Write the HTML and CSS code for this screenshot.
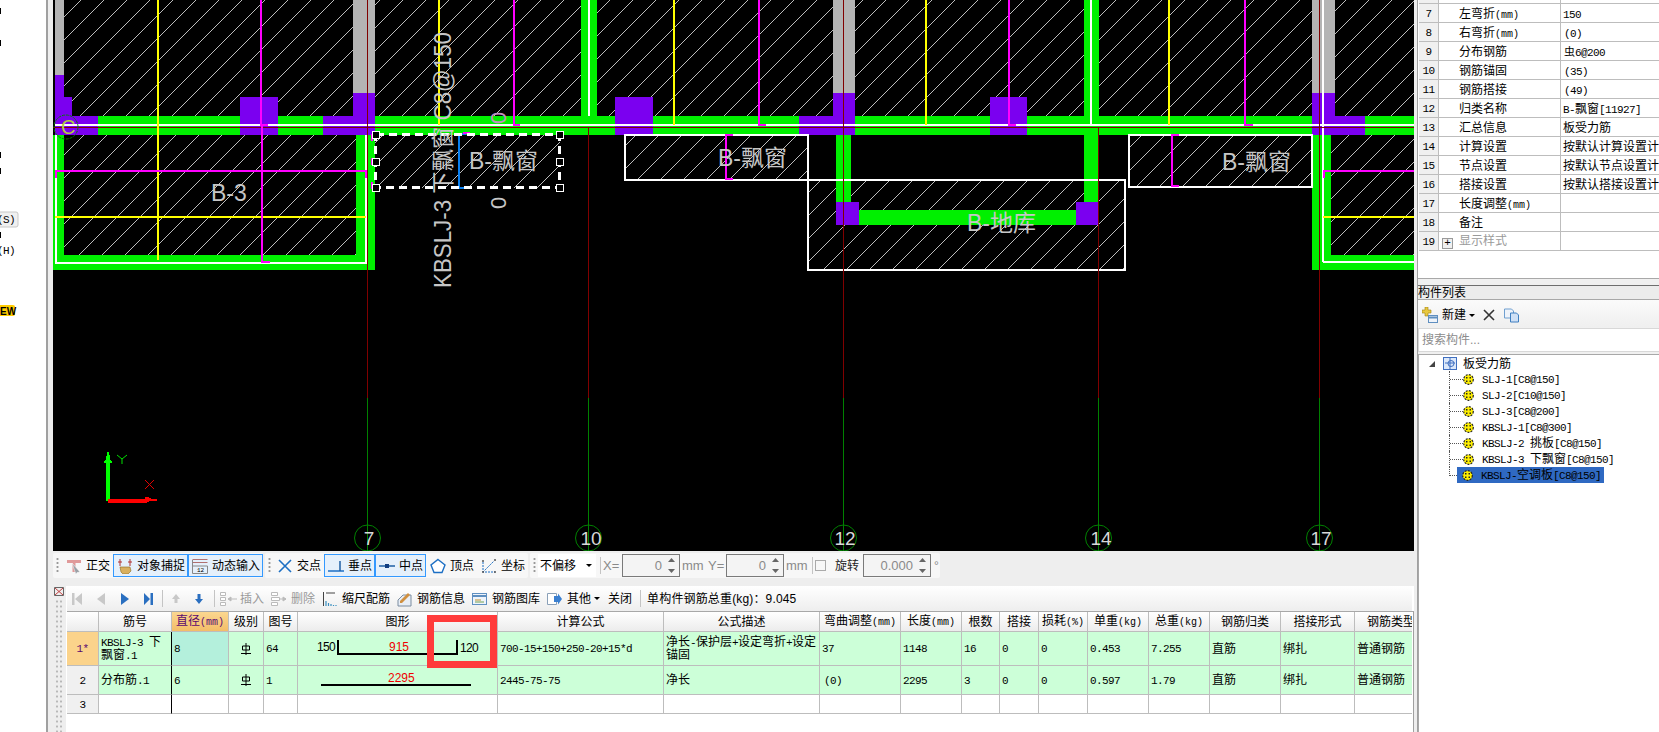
FILE: index.html
```html
<!DOCTYPE html>
<html lang="zh-CN">
<head>
<meta charset="utf-8">
<title>钢筋编辑</title>
<link rel="stylesheet" href="styles.css">
</head>
<body>
<svg width="0" height="0" class="defs">
  <defs>
    <symbol id="gear" viewBox="0 0 11 11">
      <circle cx="5.500" cy="5.500" r="4.800" fill="#fff000" stroke="#222" stroke-width="1.200" stroke-dasharray="2 1.200"/>
      <path d="M3 3h1.500v1.500H3zM6.500 3H8v1.500H6.500zM3 6.500h1.500V8H3zM6.500 6.500H8V8H6.500z" fill="#222"/>
    </symbol>
    <symbol id="dia" viewBox="0 0 10 12">
      <path d="M5 0v12M1.500 3h7v4h-7zM0 10.500h10" fill="none" stroke="#000" stroke-width="1"/>
    </symbol>
    <symbol id="spinner" viewBox="0 0 7 21">
      <path d="M3.500 3 7 7H0zM0 14h7l-3.500 4z" fill="#666"/>
    </symbol>
  </defs>
</svg>
<div class="app">
  <svg class="side" width="46" height="732" viewBox="0 0 46 732">
    <path class="tick" d="M0 8h1v6H0zM0 40h1v6H0zM0 152h1v6H0zM0 168h1v6H0zM0 232h1v6H0z"/>
    <rect class="keybtn" x="-8" y="212" width="26" height="15" rx="2"/>
    <text class="sidetxt" x="-3" y="223">(S)</text>
    <text class="sidetxt" x="-3" y="254">(H)</text>
    <rect class="ewbg" x="-2" y="305" width="17" height="11" rx="2"/>
    <text class="ewtxt" x="0" y="315">EW</text>
  </svg>

  <main class="main">
    <svg class="canvas" width="1361" height="551" viewBox="53 0 1361 551">
      <defs>
        <pattern id="h" width="23" height="23" patternUnits="userSpaceOnUse" x="6" y="6">
          <path d="M-1 24 24 -1" stroke="#bcbcbc" stroke-width="1" fill="none" shape-rendering="crispEdges"/>
        </pattern>
      </defs>
      <rect class="bg" x="53" y="0" width="1361" height="551"/>
      <g fill="url(#h)">
        <rect x="55" y="0" width="1359" height="116"/>
        <rect x="64" y="135" width="292" height="120"/>
        <rect x="375" y="134" width="185" height="54"/>
        <rect x="625" y="134" width="183" height="46"/>
        <rect x="808" y="180" width="317" height="90"/>
        <rect x="1129" y="134" width="183" height="53"/>
        <rect x="1331" y="135" width="83" height="120"/>
      </g>
      <path class="gy" d="M55 0h9v75h-9zM353 0h22v93h-22zM833 0h22v93h-22zM1312 0h23v93h-23z"/>
      <path class="gr" d="M55 116H1414V135H55zM581 0h16v116h-16zM1084 0h15v116h-15zM53 135h11v120h-11zM53 255H375v15H53zM356 135h19v120h-19zM836 135h15v67h-15zM1084 135h15v67h-15zM859 210h217v15H859zM1312 135h19v120h-19zM1312 255h102v15h-102z"/>
      <path class="pu" d="M55 75h9v22h8v19h26v19H55zM240 97h38v38h-38zM323 116h30V93h22v42h-52zM615 97h38v38h-38zM799 116h34V93h22v42h-56zM990 97h37v38h-37zM1312 93h23v23h30v19h-53zM836 202h23v23h-23zM1076 202h23v23h-23z"/>

      <path class="ln wh" d="M55 125H1414M589 0V116M1091 0V125M1323 0V262M1323 262H1414M56 135V262.500H366V135"/>
      <path class="ln wh" d="M625 135H808V180H625zM808 180H1125V270H808zM1129 135H1312V187H1129z"/>
      <path class="thin rd" d="M53 127.500H1414M367.500 0V398M588.500 127V398M843.500 0V398M1098.500 127V398M1319.500 0V398"/>
      <path class="thin dg" d="M367.500 398V551M588.500 398V551M843.500 398V551M1098.500 398V551M1319.500 398V551"/>
      <path class="ln ye" d="M158 0V260M55 217H366M439 0V125M674 0V125M926 0V125M1169 0V125M1323 217H1414"/>
      <path class="ln ma" d="M261 0V125H268M262 125V262H270M56 178V171H366V178M514 0V125H520M759 0V125H766M1009 0V125H1016M1245 0V125H1253M726 134V180M726 135H733M726 179H733M1172 134V187M1172 135H1179M1172 186H1179M1324 178V171H1414"/>

      <path class="ln bl" d="M466 134H459V188H466"/>
      <path class="ln ma" d="M463 133H470M372 134V141M372 158V165M372 182V189M558 134H562"/>
      <rect class="dash" x="375.500" y="134.500" width="184" height="53"/>
      <path class="hd" d="M372 131h7v7h-7zM372 158h7v7h-7zM372 184h7v7h-7zM556 131h7v7h-7zM556 158h7v7h-7zM556 184h7v7h-7z"/>

      <text class="vert" x="451" y="288" textLength="256" lengthAdjust="spacingAndGlyphs" transform="rotate(-90 451 288)">KBSLJ-3 下飘窗 C8@150</text>
      <text class="cad" x="211" y="201">B-3</text>
      <text class="cad" x="469" y="169">B-飘窗</text>
      <text class="cad" x="718" y="166">B-飘窗</text>
      <text class="cad" x="967" y="231">B-地库</text>
      <text class="cad" x="1222" y="170">B-飘窗</text>
      <text class="zero zm" x="506" y="124" transform="rotate(-90 506 124)">0</text>
      <text class="zero" x="506" y="209" transform="rotate(-90 506 209)">0</text>

      <circle class="ax dashc" cx="66" cy="127" r="12"/>
      <text class="axc" x="61" y="134">C</text>
      <g>
        <circle class="ax" cx="367.500" cy="538" r="13"/>
        <circle class="ax" cx="588.500" cy="538" r="13"/>
        <circle class="ax" cx="843.500" cy="538" r="13"/>
        <circle class="ax" cx="1098.500" cy="538" r="13"/>
        <circle class="ax" cx="1319.500" cy="538" r="13"/>
        <text class="axn" x="369" y="545">7</text>
        <text class="axn" x="591" y="545">10</text>
        <text class="axn" x="845" y="545">12</text>
        <text class="axn" x="1101" y="545">14</text>
        <text class="axn" x="1321" y="545">17</text>
      </g>
      <path class="uy" d="M106 501V463h-2v-2l2-1v-4l1-1v-3h2v3l1 1v4l2 1v2h-2v38z"/>
      <path class="ux" d="M108 499h37v-2.500h2l4 2h6v2h-6l-4 2h-2V503h-37z"/>
      <path class="ym" d="M117 455l5 4 5-4M122 459v5"/>
      <path class="xm" d="M145 480l9 9M154 480l-9 9"/>
    </svg>

    <div class="tools">
      <div class="group g1">
        <span class="grip"></span>
        <span class="tool m2">
          <svg class="ic" viewBox="0 0 16 16"><path d="M1 2h14v3H9.500v9h-3V5H1z" fill="#e09a9a"/><path d="M6 5l8 9-3 .5-1 2z" fill="#9aa0a6" stroke="#fff" stroke-width=".5"/></svg>
          <span>正交</span>
        </span>
        <span class="tool on w75">
          <svg class="ic" viewBox="0 0 16 16"><path d="M3 1v7M1 4h4M13 1v7M11 4h4" stroke="#b03030" fill="none"/><path d="M3 9h10l1 4-3 3H6l-2-2z" fill="#d8b060" stroke="#8a6a20" stroke-width=".6"/></svg>
          <span>对象捕捉</span>
        </span>
        <span class="tool on w75">
          <svg class="ic" viewBox="0 0 16 16"><path d="M.5 1.500h15M.5 4.500h15" stroke="#b07070"/><path d="M.5 2v13.500h15V8h-15" fill="none" stroke="#888"/><text class="ictxt" x="5" y="14">12</text></svg>
          <span>动态输入</span>
        </span>
      </div>
      <div class="group g2">
        <span class="grip"></span>
        <span class="tool m1">
          <svg class="ic" viewBox="0 0 16 16"><path d="M2 2l12 12M14 2 2 14" stroke="#1c6fc4" stroke-width="1.600" fill="none"/></svg>
          <span>交点</span>
        </span>
        <span class="tool on">
          <svg class="ic" viewBox="0 0 16 16"><path d="M0 13h16" stroke="#1c6fc4" stroke-width="1.500"/><path d="M12 3v10" stroke="#1c5fa4" stroke-width="1.500"/></svg>
          <span>垂点</span>
        </span>
        <span class="tool on">
          <svg class="ic" viewBox="0 0 16 16"><path d="M0 8h16" stroke="#1c5fa4" stroke-width="1.500"/><rect x="6" y="6" width="4" height="4" fill="#123e80"/></svg>
          <span>中点</span>
        </span>
        <span class="tool">
          <svg class="ic" viewBox="0 0 16 16"><path d="M8 1.500 15 7l-3 7.500H4L1 7z" fill="#fff" stroke="#1c6fc4" stroke-width="1.400"/></svg>
          <span>顶点</span>
        </span>
        <span class="tool">
          <svg class="ic" viewBox="0 0 16 16"><path d="M2 14 13 3M2 4v10h12" stroke="#1c6fc4" stroke-dasharray="2 1" fill="none"/><circle cx="2" cy="3" r="1" fill="#555"/><circle cx="14" cy="2" r="1" fill="#555"/><circle cx="2" cy="14" r="1" fill="#555"/><circle cx="14" cy="14" r="1" fill="#555"/></svg>
          <span>坐标</span>
        </span>
      </div>
      <div class="group g3">
        <span class="grip m3"></span>
        <span class="sel m2"><span>不偏移</span><i class="caret"></i></span>
        <span class="vsep m4"></span>
        <span class="lbl m2 w16">X=</span>
        <span class="spin m3"><span class="val">0</span><svg class="sp" width="7" height="21"><use href="#spinner"/></svg></span>
        <span class="lbl m2 w21">mm</span>
        <span class="lbl m5 w15">Y=</span>
        <span class="spin m3"><span class="val">0</span><svg class="sp" width="7" height="21"><use href="#spinner"/></svg></span>
        <span class="lbl m2 w21">mm</span>
        <span class="vsep m5"></span>
        <span class="check m2"></span>
        <span class="m9">旋转</span>
        <span class="spin wide m4"><span class="val">0.000</span><svg class="sp" width="7" height="21"><use href="#spinner"/></svg></span>
        <span class="lbl m3 deg">°</span>
      </div>
    </div>

    <div class="lower">
      <div class="dock">
        <svg class="dockx" width="10" height="9" viewBox="0 0 10 9"><path d="M.5.500h9v8h-9z" fill="#eee" stroke="#666"/><path d="M1 1l8 7M9 1 1 8" stroke="#c04040"/></svg>
        <div class="dots"></div>
      </div>
      <div class="editor">
        <div class="bar">
          <svg class="nav m5 w10" viewBox="0 0 10 14"><path d="M0 1h2.500v12H0zM10 1v12L3 7z" fill="#c8c8c8"/></svg>
          <svg class="nav m15 w8" viewBox="0 0 8 14"><path d="M8 1v12L0 7z" fill="#c8c8c8"/></svg>
          <svg class="nav m16 w8" viewBox="0 0 8 14"><path d="M0 1v12l8-6z" fill="#2a6fc0"/></svg>
          <svg class="nav m15 w9" viewBox="0 0 9 14"><path d="M0 1v12l6-6zM6.500 1H9v12H6.500z" fill="#2a6fc0"/></svg>
          <span class="vsep m9"></span>
          <svg class="nav m9 w8" viewBox="0 0 8 14"><path d="M4 2 8 7H5.500v4h-3V7H0z" fill="#c8c8c8"/></svg>
          <svg class="nav m15 w8" viewBox="0 0 8 14"><path d="M2.500 2h3v5H8l-4 5-4-5h2.500z" fill="#2a6fc0"/></svg>
          <span class="vsep m11"></span>
          <svg class="ic2 m5 w17" viewBox="0 0 17 16"><path d="M.5 1.500h5v3h-5zM.5 11.500h5v3h-5zM.5 6.500h5v3h-5z" fill="#fff" stroke="#bbb"/><path d="M8 8h9M8 8l3-2v4z" stroke="#bbb" fill="#bbb"/></svg>
          <span class="dim m3">插入</span>
          <svg class="ic2 m7 w16" viewBox="0 0 16 16"><path d="M.5 1.500h6v3h-6zM.5 11.500h6v3h-6zM.5 6.500h8v3h-8z" fill="#fff" stroke="#bbb"/><path d="M9 8h6M15 8l-3-2v4z" stroke="#bbb" fill="#bbb"/></svg>
          <span class="dim m4">删除</span>
          <svg class="ic2 m8 w14" viewBox="0 0 14 16"><path d="M.5 1v14" stroke="#444"/><path d="M3 2h9" stroke="#444"/><path d="M3 15V10M5.500 15v-3M8 15v-2M10.500 15v-1M13 15v-1" stroke="#3a8fc0" stroke-width="1.200"/></svg>
          <span class="m5">缩尺配筋</span>
          <svg class="ic2 m7 w15" viewBox="0 0 15 16"><path d="M1 9 6 4h8v11H1z" fill="#e8eef6" stroke="#7a8ca0"/><path d="M3 10 11 2l2 2-8 8H3z" fill="#d09040"/></svg>
          <span class="m5">钢筋信息</span>
          <svg class="ic2 m7 w15" viewBox="0 0 15 16"><rect x=".5" y="2.500" width="14" height="11" fill="#eef3fa" stroke="#5f8fc0"/><path d="M1 5h13" stroke="#5f8fc0" stroke-width="2"/><path d="M3 9h6" stroke="#c09030"/><path d="M3 11h9" stroke="#70a050"/></svg>
          <span class="m5">钢筋图库</span>
          <svg class="ic2 m7 w15" viewBox="0 0 15 16"><path d="M.5 2.500h9v11h-9z" fill="#fff" stroke="#8aa0b8"/><path d="M7 5h4V2.500L15 8l-4 5.500V11H7z" fill="#3a7fd0"/></svg>
          <span class="m5">其他</span>
          <i class="caret m3"></i>
          <span class="m8">关闭</span>
          <span class="vsep m8"></span>
          <span class="m6 total">单构件钢筋总重(kg)：9.045</span>
        </div>

        <div class="gridwrap">
          <table class="grid">
            <colgroup>
              <col class="c32"><col class="c73"><col class="c57"><col class="c35"><col class="c34"><col class="c200"><col class="c166"><col class="c156"><col class="c81"><col class="c61"><col class="c38"><col class="c39"><col class="c49"><col class="c61"><col class="c61"><col class="c71"><col class="c74"><col class="c57">
            </colgroup>
            <thead>
              <tr>
                <th></th><th>筋号</th><th class="act">直径<span class="u">(mm)</span></th><th>级别</th><th>图号</th><th>图形</th><th>计算公式</th><th>公式描述</th><th>弯曲调整<span class="u">(mm)</span></th><th>长度<span class="u">(mm)</span></th><th>根数</th><th>搭接</th><th>损耗<span class="u">(%)</span></th><th>单重<span class="u">(kg)</span></th><th>总重<span class="u">(kg)</span></th><th>钢筋归类</th><th>搭接形式</th><th class="clip lasth">钢筋类型</th>
              </tr>
            </thead>
            <tbody>
              <tr class="r1">
                <th class="rh cur"><span class="n">1*</span></th>
                <td class="blk"><span class="n">KBSLJ-3 </span>下飘窗<span class="n">.1</span></td>
                <td class="dia"><span class="n">8</span></td>
                <td class="ctr"><svg width="10" height="12"><use href="#dia"/></svg></td>
                <td><span class="n">64</span></td>
                <td class="fig">
                  <svg width="199" height="33" viewBox="298 632 199 33">
                    <text class="dim1" x="317" y="651">150</text>
                    <path class="rebar" d="M338 640V654H457V640"/>
                    <text class="dimr" x="389" y="651">915</text>
                    <text class="dim1" x="460" y="652">120</text>
                  </svg>
                </td>
                <td><span class="n">700-15+150+250-20+15*d</span></td>
                <td class="wrap">净长<span class="n">-</span>保护层<span class="n">+</span>设定弯折<span class="n">+</span>设定锚固</td>
                <td><span class="n">37</span></td>
                <td><span class="n">1148</span></td>
                <td><span class="n">16</span></td>
                <td><span class="n">0</span></td>
                <td><span class="n">0</span></td>
                <td><span class="n">0.453</span></td>
                <td><span class="n">7.255</span></td>
                <td>直筋</td><td>绑扎</td><td class="clip">普通钢筋</td>
              </tr>
              <tr class="r2">
                <th class="rh"><span class="n">2</span></th>
                <td class="blk">分布筋<span class="n">.1</span></td>
                <td><span class="n">6</span></td>
                <td class="ctr"><svg width="10" height="12"><use href="#dia"/></svg></td>
                <td><span class="n">1</span></td>
                <td class="fig">
                  <svg width="199" height="28" viewBox="298 666 199 28">
                    <path class="rebar" d="M321 685H471"/>
                    <text class="dimr" x="388" y="682">2295</text>
                  </svg>
                </td>
                <td><span class="n">2445-75-75</span></td>
                <td>净长</td>
                <td class="ind"><span class="n">(0)</span></td>
                <td><span class="n">2295</span></td>
                <td><span class="n">3</span></td>
                <td><span class="n">0</span></td>
                <td><span class="n">0</span></td>
                <td><span class="n">0.597</span></td>
                <td><span class="n">1.79</span></td>
                <td>直筋</td><td>绑扎</td><td class="clip">普通钢筋</td>
              </tr>
              <tr class="r3">
                <th class="rh"><span class="n">3</span></th>
                <td class="blk"></td><td></td><td></td><td></td><td></td><td></td><td></td><td></td><td></td><td></td><td></td><td></td><td></td><td></td><td></td><td></td><td class="clip"></td>
              </tr>
            </tbody>
          </table>
          <div class="mark"></div>
        </div>
      </div>
    </div>
  </main>

  <aside class="panel">
    <div class="props">
      <table class="ptable">
        <tr><th>6</th><td>标注长度位置</td><td></td></tr>
        <tr><th>7</th><td>左弯折<span class="u">(mm)</span></td><td><span class="n">150</span></td></tr>
        <tr><th>8</th><td>右弯折<span class="u">(mm)</span></td><td class="ind"><span class="n">(0)</span></td></tr>
        <tr><th>9</th><td>分布钢筋</td><td class="ind"><span class="rb">虫</span><span class="n">6@200</span></td></tr>
        <tr><th>10</th><td>钢筋锚固</td><td class="ind"><span class="n">(35)</span></td></tr>
        <tr><th>11</th><td>钢筋搭接</td><td class="ind"><span class="n">(49)</span></td></tr>
        <tr><th>12</th><td>归类名称</td><td><span class="n">B-</span>飘窗<span class="n">[11927]</span></td></tr>
        <tr><th>13</th><td>汇总信息</td><td>板受力筋</td></tr>
        <tr><th>14</th><td>计算设置</td><td>按默认计算设置计算</td></tr>
        <tr><th>15</th><td>节点设置</td><td>按默认节点设置计算</td></tr>
        <tr><th>16</th><td>搭接设置</td><td>按默认搭接设置计算</td></tr>
        <tr><th>17</th><td>长度调整<span class="u">(mm)</span></td><td></td></tr>
        <tr><th>18</th><td>备注</td><td></td></tr>
        <tr class="off"><th>19</th><td><i class="plus">+</i>显示样式</td><td></td></tr>
      </table>
    </div>
    <div class="ptitle">构件列表</div>
    <div class="ptools">
      <svg class="pi w16" viewBox="0 0 16 16"><path d="M3 0h3v3h3v3H6v3H3V6H0V3h3z" fill="#e8c840" stroke="#a08010" stroke-width=".6"/><rect x="6.500" y="8.500" width="9" height="7" fill="#eef3fa" stroke="#5f8fc0"/><path d="M7 10.500h8" stroke="#5f8fc0" stroke-width="2"/></svg>
      <span class="m4">新建</span>
      <i class="caret m3"></i>
      <svg class="pi m8 w12" viewBox="0 0 12 12"><path d="M1 1l10 10M11 1 1 11" stroke="#333" stroke-width="1.600"/></svg>
      <svg class="pi m9 w15" viewBox="0 0 15 15"><path d="M.5 1.500h7l2 2v7h-9z" fill="#eef3fa" stroke="#6f9fd0"/><path d="M6.500 5.500h6l2 2v7h-8z" fill="#cfe0f5" stroke="#3f7fc0"/></svg>
    </div>
    <div class="search">搜索构件...</div>
    <div class="tree">
      <div class="root">
        <svg class="tw" width="8" height="8" viewBox="0 0 8 8"><path d="M7 1v6H1z" fill="#444"/></svg>
        <svg class="rooticon" width="14" height="13" viewBox="0 0 14 13"><rect x=".5" y=".5" width="13" height="12" fill="#dbe8fa" stroke="#3f6fc0"/><path d="M7 1v11M2 6h10" stroke="#3f6fc0"/><circle cx="8" cy="6.500" r="3" fill="none" stroke="#3f6fc0"/></svg>
        <span>板受力筋</span>
      </div>
      <ul class="kids">
        <li><span class="stub"></span><svg class="gear" width="11" height="11"><use href="#gear"/></svg><span class="lab"><span class="n">SLJ-1[C8@150]</span></span></li>
        <li><span class="stub"></span><svg class="gear" width="11" height="11"><use href="#gear"/></svg><span class="lab"><span class="n">SLJ-2[C10@150]</span></span></li>
        <li><span class="stub"></span><svg class="gear" width="11" height="11"><use href="#gear"/></svg><span class="lab"><span class="n">SLJ-3[C8@200]</span></span></li>
        <li><span class="stub"></span><svg class="gear" width="11" height="11"><use href="#gear"/></svg><span class="lab"><span class="n">KBSLJ-1[C8@300]</span></span></li>
        <li><span class="stub"></span><svg class="gear" width="11" height="11"><use href="#gear"/></svg><span class="lab"><span class="n">KBSLJ-2 </span>挑板<span class="n">[C8@150]</span></span></li>
        <li><span class="stub"></span><svg class="gear" width="11" height="11"><use href="#gear"/></svg><span class="lab"><span class="n">KBSLJ-3 </span>下飘窗<span class="n">[C8@150]</span></span></li>
        <li class="sel-node"><span class="stub"></span><span class="hl"><svg class="gear" width="11" height="11"><use href="#gear"/></svg><span class="lab"><span class="n">KBSLJ-</span>空调板<span class="n">[C8@150]</span></span></span></li>
      </ul>
    </div>
  </aside>
</div>
</body>
</html>
```

FILE: styles.css
```css
* { box-sizing: border-box; }
html, body { margin: 0; height: 732px; overflow: hidden; background: #fff; }
body {
  width: 1659px;
  font: 12px/16px "Liberation Sans", "Noto Sans CJK SC", sans-serif;
  color: #000;
}
.defs { display: block; height: 0; }
.app { display: flex; width: 1659px; height: 732px; overflow: hidden; }

/* clipped window at the far left */
.side { flex: none; display: block; background: #fff; }
.tick { fill: #000; }
.keybtn { fill: #f0f0f0; stroke: #c8c8c8; }
.sidetxt { font: 11px "Liberation Mono", monospace; letter-spacing: -.6px; fill: #000; }
.ewbg { fill: #ffcc00; }
.ewtxt { font: bold 10px "Liberation Sans", sans-serif; fill: #000; }

/* main column */
.main {
  flex: none;
  width: 1372px;
  height: 732px;
  background: #eeeeee;
  border-left: 2px solid #a0a0a0;
  border-right: 1px solid #a0a0a0;
  padding: 0 3px 0 5px;
  display: flex;
  flex-direction: column;
}
.canvas { display: block; flex: none; }
.bg { fill: #000; }
.gy { fill: #b4b4b4; }
.gr { fill: #00f000; }
.pu { fill: #7b00f0; }
.ln { fill: none; stroke-width: 2; shape-rendering: crispEdges; }
.thin { fill: none; stroke-width: 1; shape-rendering: crispEdges; }
.wh { stroke: #fff; }
.rd { stroke: #800000; }
.dg { stroke: #008000; }
.ye { stroke: #ffff00; }
.ma { stroke: #ff00ff; }
.bl { stroke: #0a80f0; }
.dash { fill: none; stroke: #fff; stroke-width: 3; stroke-dasharray: 8 5; shape-rendering: crispEdges; }
.hd { fill: #000; stroke: #fff; stroke-width: 1; shape-rendering: crispEdges; }
.cad { font: 23px "Liberation Sans", "Noto Sans CJK SC", sans-serif; fill: #c6c6c6; }
.vert { font: 23px "Liberation Sans", "Noto Sans CJK SC", sans-serif; fill: #c6c6c6; }
.zero { font: 22px "Liberation Sans", sans-serif; fill: #c6c6c6; }
.zm { fill: #c090c0; }
.ax { fill: none; stroke: #008000; stroke-width: 1; }
.dashc { stroke-dasharray: 3 1; }
.axc { font: 20px "Liberation Sans", sans-serif; fill: #b0d040; }
.axn { font: 19px "Liberation Sans", sans-serif; fill: #d8d8d8; text-anchor: middle; }
.uy { fill: #00ff00; shape-rendering: crispEdges; }
.ux { fill: #ff0000; shape-rendering: crispEdges; }
.ym { fill: none; stroke: #00e000; }
.xm { fill: none; stroke: #e00000; }

/* snap toolbar */
.tools { flex: none; height: 35px; display: flex; align-items: flex-start; padding-top: 2px; gap: 2px; }
.group { height: 25px; display: flex; align-items: center; background: #f7f7f7; border-radius: 2px; }
.g1 { width: 210px; }
.g2 { width: 263px; }
.g3 { width: 410px; color: #222; }
.grip {
  flex: none; width: 3px; height: 17px; margin-left: 3px; margin-right: 1px;
  background: radial-gradient(circle, #999 1px, transparent 1.200px) 0 0 / 3px 4px;
}
.g3 .grip { margin-right: 0; margin-left: 3px; }
.tool {
  flex: none; width: 51px; height: 23px;
  display: flex; align-items: center; gap: 4px;
  padding: 0 2px 0 3px;
  border: 1px solid transparent;
}
.tool.on { background: #e5f0fb; border-color: #3399ff; }
.tool.w75 { width: 75px; }
.ic { flex: none; width: 16px; height: 16px; display: block; }
.ictxt { font: 6px "Liberation Mono", monospace; fill: #000; }
.sel { flex: none; width: 58px; height: 23px; background: #fff; display: flex; align-items: center; justify-content: space-between; padding: 0 4px 0 2px; color: #000; }
.caret { flex: none; width: 0; height: 0; border: 3px solid transparent; border-top: 3px solid #000; border-bottom: 0; display: block; }
.vsep { flex: none; width: 1px; height: 17px; background: #c4c4c4; display: block; }
.lbl { flex: none; color: #8a8a8a; font-size: 13px; }
.w16 { width: 16px; } .w21 { width: 21px; } .w15 { width: 15px; } .w10 { width: 10px; }
.w8 { width: 8px; } .w9 { width: 9px; } .w17 { width: 17px; } .w14 { width: 14px; } .w12 { width: 12px; }
.spin {
  flex: none; width: 58px; height: 23px;
  border: 1px solid #7a7a7a; background: #f4f4f4;
  display: flex; align-items: center; justify-content: flex-end; gap: 6px;
  padding-right: 4px; color: #8a8a8a; font-size: 13px;
}
.spin.wide { width: 68px; }
.sp { flex: none; display: block; }
.check { flex: none; width: 11px; height: 11px; border: 1px solid #aaa; background: #f7f7f7; }
.deg { font-size: 12px; }

.m1 { margin-left: 1px; } .m2 { margin-left: 2px; } .m3 { margin-left: 3px; } .m4 { margin-left: 4px; }
.m5 { margin-left: 5px; } .m6 { margin-left: 6px; } .m7 { margin-left: 7px; } .m8 { margin-left: 8px; }
.m9 { margin-left: 9px; } .m11 { margin-left: 11px; } .m15 { margin-left: 15px; } .m16 { margin-left: 16px; }

/* lower editor */
.lower { flex: 1; min-height: 0; display: flex; }
.dock { flex: none; width: 13px; padding: 1px 0 0 1px; display: flex; flex-direction: column; gap: 3px; }
.dockx { display: block; }
.dots {
  flex: 1; width: 8px; margin-left: 1px;
  background: radial-gradient(circle, #b8b8b8 1px, transparent 1.200px) 0 0 / 4px 5px;
}
.editor { flex: 1; min-width: 0; padding-left: 1px; display: flex; flex-direction: column; background: #fff; }
.bar {
  flex: none; height: 25px; width: 1345px;
  display: flex; align-items: center; white-space: nowrap;
  background: linear-gradient(#ffffff, #eeeeee);
}
.nav, .ic2, .pi { flex: none; display: block; height: 14px; }
.ic2 { height: 16px; }
.pi { height: 16px; }
.dim { color: #9a9a9a; }
.total { letter-spacing: .15px; }

.gridwrap { flex: 1; position: relative; border-top: 1px solid #a8a8a8; border-right: 1px solid #a0a0a0; background: #fff; overflow: hidden; }
.grid { table-layout: fixed; width: 1345px; border-collapse: separate; border-spacing: 0; }
.c32 { width: 32px; } .c73 { width: 73px; } .c57 { width: 57px; } .c35 { width: 35px; } .c34 { width: 34px; }
.c200 { width: 200px; } .c166 { width: 166px; } .c156 { width: 156px; } .c81 { width: 81px; } .c61 { width: 61px; }
.c38 { width: 38px; } .c39 { width: 39px; } .c49 { width: 49px; } .c71 { width: 71px; } .c74 { width: 74px; }
.grid th, .grid td {
  border-right: 1px solid #bdbdbd; border-bottom: 1px solid #bdbdbd;
  padding: 0 2px; overflow: hidden; white-space: nowrap;
  font-weight: 400; line-height: 12px;
}
.grid thead tr { height: 20px; }
.grid thead th { background: linear-gradient(#ffffff, #ececec); text-align: center; padding: 0; }
.grid thead th.act { background: linear-gradient(#fbd790, #f3bd68); color: #5a0a70; }
.grid .clip { border-right: 0; }
.grid thead th.lasth { text-align: left; padding-left: 12px; }
.r1 { height: 34px; } .r2 { height: 29px; } .r3 { height: 19px; }
.r1 td, .r2 td { background: #ccffd8; }
.r1 td.dia { background: #b4f0dc; }
.rh { background: #f0f0f0; text-align: center; padding: 0; }
.grid .rh.cur { background: #fbd38b; color: #5a0a70; }
.grid td.blk { border-right: 1px solid #000; white-space: normal; word-break: break-all; }
.grid td.wrap { white-space: normal; }
.grid td.ctr { text-align: center; }
.grid td.ctr svg { display: block; margin: 0 auto; }
.grid td.fig { padding: 0; }
.grid td.ind { padding-left: 4px; }
.fig svg { display: block; }
.rebar { fill: none; stroke: #000; stroke-width: 2; shape-rendering: crispEdges; }
.dim1 { font: 12px "Liberation Sans", sans-serif; letter-spacing: -.7px; fill: #000; }
.dimr { font: 12px "Liberation Sans", sans-serif; fill: #f00000; }
.n { font: 11px "Liberation Mono", monospace; letter-spacing: -.6px; }
.u { font: 10px "Liberation Mono", monospace; letter-spacing: 0; }
.mark { position: absolute; left: 360px; top: 3px; width: 70px; height: 53px; border: 7px solid #ff3b3b; }

/* right panel */
.panel { flex: none; width: 241px; height: 732px; background: #f0f0f0; display: flex; flex-direction: column; }
.props { flex: none; height: 279px; background: #fff; border-bottom: 1px solid #a8a8a8; padding-left: 1px; overflow: hidden; }
.ptable { width: 240px; table-layout: fixed; border-collapse: separate; border-spacing: 0; margin-top: -15px; }
.ptable tr { height: 19px; }
.ptable th, .ptable td { border-bottom: 1px solid #bdbdbd; padding: 2px 0 0; font-weight: 400; line-height: 12px; white-space: nowrap; overflow: hidden; }
.ptable th { width: 20px; background: #f0f0f0; border-right: 1px solid #bdbdbd; text-align: center; font-family: "Liberation Mono", monospace; font-size: 11px; letter-spacing: -.6px; }
.ptable td:nth-child(2) { width: 122px; padding-left: 20px; border-right: 1px solid #bdbdbd; }
.ptable td:nth-child(3) { padding-left: 2px; }
.ptable td.ind:nth-child(3) { padding-left: 3px; }
.off td { color: #9a9a9a; }
.rb { font-size: 11px; }
.plus {
  display: inline-block; width: 11px; height: 11px; margin: 0 6px 0 -17px;
  border: 1px solid #9a9a9a; background: #f0f0f0; color: #000;
  font: 11px/9px "Liberation Mono", monospace; text-align: center; vertical-align: -1px;
}
.ptitle { flex: none; margin-top: 6px; height: 15px; border-top: 1px solid #6e6e6e; border-bottom: 1px solid #a8a8a8; background: #ececec; line-height: 15px; }
.ptools { flex: none; height: 27px; padding: 3px 0 0 4px; display: flex; align-items: center; background: linear-gradient(#fbfbfb, #efefef); }
.search { flex: none; margin: 1px 0 2px; height: 24px; padding: 0 3px; line-height: 23px; background: #fff; border: 1px solid #d8d8d8; border-right: 0; color: #8c8c8c; }
.tree { flex: 1; background: #fff; border-top: 1px solid #a8a8a8; border-left: 1px solid #a8a8a8; padding-top: 1px; }
.root { height: 15px; display: flex; align-items: center; padding-left: 9px; }
.tw { flex: none; display: block; }
.rooticon { flex: none; display: block; margin: 0 6px 0 7px; }
.kids { list-style: none; margin: 0 0 0 30px; padding: 0; }
.kids li { height: 16px; display: flex; align-items: center; border-left: 1px dotted #555; }
.kids li.sel-node { border-left-color: transparent; }
.stub { flex: none; align-self: flex-start; width: 13px; height: 9px; border-bottom: 1px dotted #555; }
.sel-node .stub { width: 8px; margin-left: -1px; border-left: 1px dotted #555; }
.gear { flex: none; display: block; }
.kids .gear { margin-right: 8px; }
.hl { flex: none; width: 147px; height: 16px; margin-left: 0; padding-left: 5px; display: flex; align-items: center; background: #2f69c2; }
.lab { white-space: nowrap; }
```
